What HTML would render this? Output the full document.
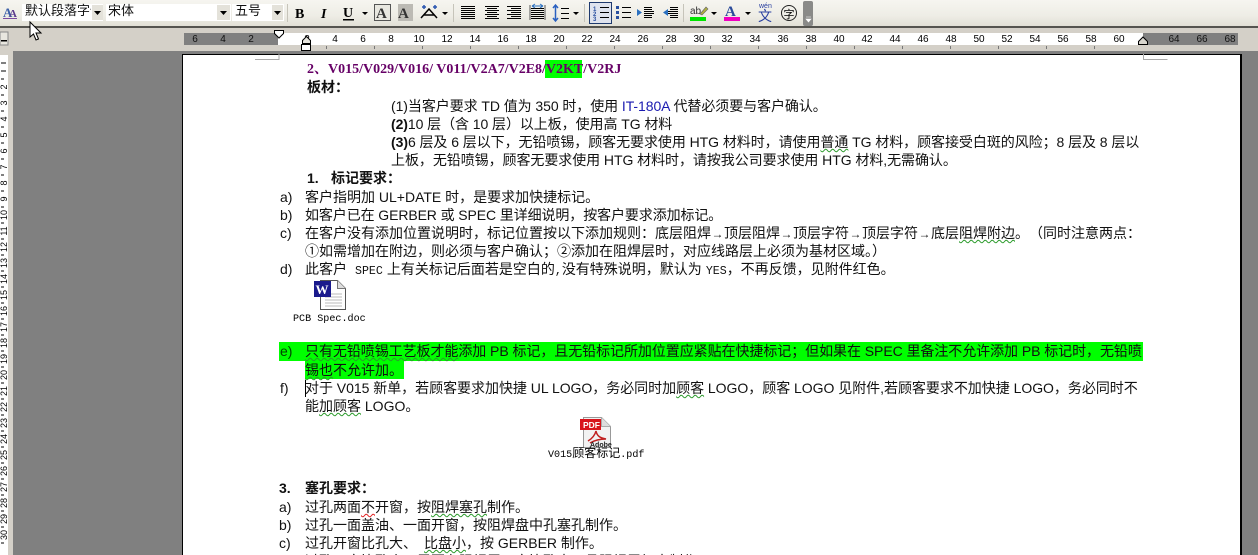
<!DOCTYPE html>
<html lang="zh"><head><meta charset="utf-8"><title>Word</title>
<style>
html,body{margin:0;padding:0;width:1258px;height:555px;overflow:hidden;background:#d4d0c8}
#w{position:absolute;left:0;top:0;width:1258px;height:555px;overflow:hidden}
.a{position:absolute}
.l{position:absolute;white-space:nowrap;font:14px/18px "Liberation Sans","WenQuanYi Zen Hei","Noto Sans CJK SC",sans-serif;color:#111;height:18px}
.b{font-weight:bold}
.g{text-decoration:underline wavy #2a9a2a 1px;text-underline-offset:1px}
.r{text-decoration:underline wavy #e02020 1px;text-underline-offset:1px}
.ar{display:inline-block;width:13px;font-size:12px;line-height:14px;text-align:center;letter-spacing:0;overflow:visible}
.mo{font:11.6px "Liberation Mono",monospace}
.m{position:absolute;white-space:nowrap;font:10.1px/13px "Liberation Mono","WenQuanYi Zen Hei",monospace;color:#000}
svg{position:absolute;left:0;top:0}
.t{font:10px "Liberation Sans",sans-serif;fill:#000;text-anchor:middle}
.tg{font:10px "Liberation Sans",sans-serif;fill:#111;text-anchor:middle}
</style></head><body><div id="w">
<div class="a" style="left:0;top:0;width:1258px;height:26px;background:linear-gradient(#f6f5f0,#eeede6 60%,#e2e0d6)"></div>
<div class="a" style="left:0;top:26px;width:1258px;height:2px;background:#55544f"></div>
<div class="a" style="left:0;top:28px;width:1258px;height:25px;background:#d4d0c8"></div>
<div class="a" style="left:13px;top:51px;width:1245px;height:504px;background:#808080"></div>
<div class="a" style="left:0;top:55px;width:8px;height:500px;background:#fff"></div>
<div class="a" style="left:183px;top:54px;width:1057px;height:501px;background:#fff;border-left:1px solid #000;border-right:2px solid #000;border-top:1px solid #000;box-sizing:content-box;margin-left:-1px"></div>

<!-- combos -->
<div class="a" style="left:22px;top:4px;width:81px;height:17px;background:#fff"></div>
<div class="a" style="left:106px;top:4px;width:125px;height:17px;background:#fff"></div>
<div class="a" style="left:232px;top:4px;width:52px;height:17px;background:#fff"></div>
<div class="a" style="left:92px;top:5px;width:11px;height:15px;background:#e4e2da"></div>
<div class="a" style="left:217px;top:5px;width:13px;height:15px;background:#e4e2da"></div>
<div class="a" style="left:272px;top:5px;width:11px;height:15px;background:#e4e2da"></div>
<div class="l" style="left:25px;top:2px;width:66px;overflow:hidden;font-size:13px">默认段落字体</div>
<div class="l" style="left:108px;top:2px;font-size:13px">宋体</div>
<div class="l" style="left:235px;top:2px;font-size:13px">五号</div>

<svg width="1258" height="555" viewBox="0 0 1258 555">
 <!-- style icon -->
 <text x="3" y="17" font-family="Liberation Serif" font-size="13" font-weight="bold" fill="#3b5fa8">A</text>
 <text x="9" y="17" font-family="Liberation Serif" font-size="11" font-weight="bold" fill="#5a3a8c">A</text>
 <rect x="3" y="18" width="14" height="1" fill="#7a4aa0"/>
 <!-- dropdown arrows -->
 <g fill="#000">
  <path d="M94 11h7l-3.500 4z"/><path d="M220 11h7l-3.500 4z"/><path d="M274 11h7l-3.500 4z"/>
  <path d="M362 12h6l-3 3z"/><path d="M442 12h6l-3 3z"/><path d="M573 12h6l-3 3z"/>
  <path d="M711 12h6l-3 3z"/><path d="M745 12h6l-3 3z"/>
 </g>
 <!-- separators -->
 <g fill="#c6c4ba"><rect x="287" y="4" width="1" height="18"/><rect x="453" y="4" width="1" height="18"/><rect x="584" y="4" width="1" height="18"/><rect x="683" y="4" width="1" height="18"/></g>
 <!-- B I U A A -->
 <text x="295" y="18" font-family="Liberation Serif" font-size="14" font-weight="bold">B</text>
 <text x="321" y="18" font-family="Liberation Serif" font-size="14" font-weight="bold" font-style="italic">I</text>
 <text x="343" y="17" font-family="Liberation Serif" font-size="14" font-weight="bold">U</text>
 <rect x="343" y="19" width="11" height="1.500" fill="#000"/>
 <rect x="374.500" y="4.500" width="16" height="16" fill="#e8e7e0" stroke="#555"/>
 <text x="376" y="18" font-family="Liberation Serif" font-size="15" font-weight="bold" fill="#333">A</text>
 <rect x="398" y="4" width="15" height="17" fill="#bcbab4"/>
 <text x="398" y="18" font-family="Liberation Serif" font-size="15" font-weight="bold" fill="#333">A</text>
 <path d="M421 18l8-9 8 9M424 15h10" fill="none" stroke="#000" stroke-width="1.500"/>
 <path d="M422 7h4M424 5v4M433 7h4M435 5v4" stroke="#2a55b0" stroke-width="1.500"/>
 <!-- alignment -->
 <g stroke="#000" stroke-width="1" fill="none">
  <path d="M461 6.500h14M461 8.500h14M461 10.500h14M461 12.500h14M461 14.500h14M461 16.500h14M461 18.500h14"/>
  <path d="M485 6.500h14M487 8.500h10M485 10.500h14M487 12.500h10M485 14.500h14M487 16.500h10M485 18.500h14"/>
  <path d="M507 6.500h14M511 8.500h10M507 10.500h14M511 12.500h10M507 14.500h14M511 16.500h10M507 18.500h14"/>
  <path d="M531 8.500h13M531 10.500h13M531 12.500h13M531 14.500h13M531 16.500h13M531 18.500h13"/>
  <path d="M530 5v15M545 5v15" stroke="#555"/>
 </g>
 <path d="M532 6h11M532 6l3-2M532 6l3 2M543 6l-3-2M543 6l-3 2" stroke="#2a70c0" fill="none"/>
 <path d="M555.500 6v14M553 8l2.500-3 2.500 3M553 18l2.500 3 2.500-3" stroke="#2a60c0" fill="none" stroke-width="1.500"/>
 <path d="M561 8.500h8M561 13.500h8M561 18.500h8" stroke="#000" fill="none"/>
 <!-- numbering -->
 <rect x="589.500" y="2.500" width="22" height="21" fill="#dfe3ee" stroke="#1f3a6e"/>
 <g stroke="#000" fill="none">
  <path d="M600 7.500h9M600 12.500h9M600 17.500h9"/>
  <path d="M622 7.500h9M622 12.500h9M622 17.500h9"/>
  <path d="M644 7.500h8M644 9.500h8M644 11.500h10M644 13.500h10M644 15.500h8M644 17.500h8"/>
  <path d="M670 7.500h8M670 9.500h8M668 11.500h10M668 13.500h10M670 15.500h8M670 17.500h8"/>
 </g>
 <g fill="#2a50a0">
  <text x="593" y="11" font-size="6" font-family="Liberation Sans" font-weight="bold">1</text>
  <text x="593" y="16" font-size="6" font-family="Liberation Sans" font-weight="bold">2</text>
  <text x="593" y="21" font-size="6" font-family="Liberation Sans" font-weight="bold">3</text>
  <rect x="616" y="6" width="3" height="3"/><rect x="616" y="11" width="3" height="3"/><rect x="616" y="16" width="3" height="3"/>
  <path d="M642 12.500l-5-3.500v7zM663 12.500l5-3.500v7z" fill="#2a70c0"/>
 </g>
 <!-- highlight -->
 <text x="690" y="14" font-size="10" font-family="Liberation Sans" fill="#333">ab</text>
 <path d="M700 14l6-7 2 2-6 6z" fill="#b0b040" stroke="#666" stroke-width=".6"/>
 <rect x="690" y="17" width="16" height="4" fill="#00e400"/>
 <text x="725" y="16" font-family="Liberation Serif" font-size="15" font-weight="bold" fill="#2a4a9a">A</text>
 <rect x="724" y="17" width="16" height="4" fill="#f000c0"/>
 <text x="759" y="8" font-size="7" font-family="Liberation Sans" fill="#2a40a0">wén</text>
 <text x="758" y="21" font-size="14" font-family="WenQuanYi Zen Hei,Noto Sans CJK SC,sans-serif" fill="#2a40a0">文</text>
 <circle cx="789" cy="13" r="7.500" fill="none" stroke="#222"/>
 <text x="783.500" y="18" font-size="11" font-family="WenQuanYi Zen Hei,Noto Sans CJK SC,sans-serif">字</text>
 <rect x="803" y="1" width="10" height="25" rx="2" fill="#8a8a88"/>
 <path d="M806 17h5M806 19h5l-2.500 3z" fill="#fff" stroke="#fff" stroke-width=".6"/>

 <!-- box top-left -->
 <rect x="0" y="32" width="8" height="13" fill="#e8e6df" stroke="#888"/>
 <rect x="1" y="40" width="6" height="1.500" fill="#000"/>

 <!-- h ruler -->
 <rect x="184" y="33" width="94" height="12" fill="#808080"/>
 <rect x="278" y="33" width="865" height="12" fill="#fff"/>
 <rect x="1143" y="33" width="95" height="12" fill="#808080"/>
 <g class="tg">
  <text class="tg" x="195" y="42">6</text><text class="tg" x="223" y="42">4</text><text class="tg" x="251" y="42">2</text>
  <text class="tg" x="1174" y="42">64</text><text class="tg" x="1202" y="42">66</text><text class="tg" x="1230" y="42">68</text>
 </g>
 <g>
  <text class="t" x="307" y="42">2</text><text class="t" x="335" y="42">4</text><text class="t" x="363" y="42">6</text><text class="t" x="391" y="42">8</text><text class="t" x="419" y="42">10</text><text class="t" x="447" y="42">12</text><text class="t" x="475" y="42">14</text><text class="t" x="503" y="42">16</text><text class="t" x="531" y="42">18</text><text class="t" x="559" y="42">20</text><text class="t" x="587" y="42">22</text><text class="t" x="615" y="42">24</text><text class="t" x="643" y="42">26</text><text class="t" x="671" y="42">28</text><text class="t" x="699" y="42">30</text><text class="t" x="727" y="42">32</text><text class="t" x="755" y="42">34</text><text class="t" x="783" y="42">36</text><text class="t" x="811" y="42">38</text><text class="t" x="839" y="42">40</text><text class="t" x="867" y="42">42</text><text class="t" x="895" y="42">44</text><text class="t" x="923" y="42">46</text><text class="t" x="951" y="42">48</text><text class="t" x="979" y="42">50</text><text class="t" x="1007" y="42">52</text><text class="t" x="1035" y="42">54</text><text class="t" x="1063" y="42">56</text><text class="t" x="1091" y="42">58</text><text class="t" x="1119" y="42">60</text>
 </g>
 <path d="M326.500 46v3M374.500 46v3M422.500 46v3M470.500 46v3M518.500 46v3M566.500 46v3M614.500 46v3M662.500 46v3M710.500 46v3M758.500 46v3M806.500 46v3M854.500 46v3M902.500 46v3M950.500 46v3M998.500 46v3M1046.500 46v3M1094.500 46v3" stroke="#777"/>
 <!-- markers -->
 <path d="M274.500 30.500h9v3l-4.500 4.500-4.500-4.500z" fill="#fff" stroke="#000"/>
 <path d="M302.500 40.500l4-4 4 4v3h-8z" fill="#e8e6df" stroke="#000"/>
 <rect x="301.500" y="44.500" width="9" height="6" fill="#fff" stroke="#000"/>
 <path d="M1138.500 44.500v-3l4.500-4.500 4.500 4.500v3z" fill="#d8d6ce" stroke="#000"/>

 <!-- v ruler ticks -->
 <path d="M1 63h5M1 71h5M1 79h3M1 95h3M1 111h3M1 127h3M1 143h3M1 159h3M1 175h3M1 191h3M1 207h3M1 223h3M1 239h3M1 255h3M1 271h3M1 287h3M1 303h3M1 319h3M1 335h3M1 351h3M1 367h3M1 383h3M1 399h3M1 415h3M1 431h3M1 447h3M1 463h3M1 479h3M1 495h3M1 511h3M1 527h3M1 543h3" stroke="#000"/>
 <g font-family="Liberation Sans" font-size="9" fill="#000" text-anchor="middle">
  <text transform="translate(7,87) rotate(-90)">2</text><text transform="translate(7,103) rotate(-90)">3</text><text transform="translate(7,119) rotate(-90)">4</text><text transform="translate(7,135) rotate(-90)">5</text><text transform="translate(7,151) rotate(-90)">6</text><text transform="translate(7,167) rotate(-90)">7</text><text transform="translate(7,183) rotate(-90)">8</text><text transform="translate(7,199) rotate(-90)">9</text><text transform="translate(7,215) rotate(-90)">10</text><text transform="translate(7,231) rotate(-90)">11</text><text transform="translate(7,247) rotate(-90)">12</text><text transform="translate(7,263) rotate(-90)">13</text><text transform="translate(7,279) rotate(-90)">14</text><text transform="translate(7,295) rotate(-90)">15</text><text transform="translate(7,311) rotate(-90)">16</text><text transform="translate(7,327) rotate(-90)">17</text><text transform="translate(7,343) rotate(-90)">18</text><text transform="translate(7,359) rotate(-90)">19</text><text transform="translate(7,375) rotate(-90)">20</text><text transform="translate(7,391) rotate(-90)">21</text><text transform="translate(7,407) rotate(-90)">22</text><text transform="translate(7,423) rotate(-90)">23</text><text transform="translate(7,439) rotate(-90)">24</text><text transform="translate(7,455) rotate(-90)">25</text><text transform="translate(7,471) rotate(-90)">26</text><text transform="translate(7,487) rotate(-90)">27</text><text transform="translate(7,503) rotate(-90)">28</text><text transform="translate(7,519) rotate(-90)">29</text><text transform="translate(7,535) rotate(-90)">30</text>
 </g>

 <!-- crop marks -->
 <path d="M255 59.500h24V54M1143.500 54v5.500h24" fill="none" stroke="#aaa"/>
 <!-- cursor -->
 <path d="M30 22v15l3.500-3 2.500 6 2.500-1-2.500-6h5z" fill="#fff" stroke="#000"/>
</svg>

<!-- document text -->
<div class="a" style="left:279px;top:342px;width:864px;height:19px;background:#00ff00"></div>
<div class="a" style="left:305px;top:361px;width:99px;height:18px;background:#00ff00"></div>
<div class="a" style="left:545px;top:60px;width:37px;height:18px;background:#00ff00"></div>

<div class="l b" style="left:307px;top:61px;color:#660066;font-family:'Liberation Serif','Noto Serif CJK SC',serif">2、<span style="position:absolute;left:21px;top:0">V015/V029/V016/ V011/V2A7/V2E8/V2KT/V2RJ</span></div>
<div class="l b" style="left:307px;top:78px">板材：</div>
<div class="l" style="left:391px;top:97px;letter-spacing:-.07px">(1)当客户要求 TD 值为 350 时，使用 <span style="color:#1a1ab0">IT-180A</span> 代替必须要与客户确认。</div>
<div class="l" style="left:391px;top:115px;letter-spacing:-.07px"><b>(2)</b>10 层（含 10 层）以上板，使用高 TG 材料</div>
<div class="l" style="left:391px;top:133px;letter-spacing:-.06px"><b>(3)</b>6 层及 6 层以下，无铅喷锡，顾客无要求使用 HTG 材料时，请使用<span class="g">普通</span> TG 材料，顾客接受白斑的风险；8 层及 8 层以</div>
<div class="l" style="left:391px;top:151px;letter-spacing:-.06px">上板，无铅喷锡，顾客无要求使用 HTG 材料时，请按我公司要求使用 HTG 材料,无需确认。</div>
<div class="l b" style="left:307px;top:169px">1.<span style="position:absolute;left:24px;top:0">标记要求：</span></div>
<div class="l" style="left:280px;top:188px">a)</div><div class="l" style="left:305px;top:188px">客户指明加 UL+DATE 时，是要求加快捷标记。</div>
<div class="l" style="left:280px;top:206px">b)</div><div class="l" style="left:305px;top:206px;letter-spacing:-.1px">如客户已在 GERBER 或 SPEC 里详细说明，按客户要求添加标记。</div>
<div class="l" style="left:280px;top:224px">c)</div><div class="l" style="left:305px;top:224px;text-spacing-trim:space-all">在客户没有添加位置说明时，标记位置按以下添加规则：底层阻焊<span class="ar">→</span>顶层阻焊<span class="ar">→</span>顶层字符<span class="ar">→</span>顶层字符<span class="ar">→</span>底层<span class="g">阻焊附边</span>。（同时注意两点：</div>
<div class="l" style="left:305px;top:242px">①如需增加在附边，则必须与客户确认；②添加在阻焊层时，对应线路层上必须为基材区域。）</div>
<div class="l" style="left:280px;top:260px">d)</div><div class="l" style="left:305px;top:260px">此客户<span class="mo" style="margin-left:8px;margin-right:4px">SPEC</span>上有关标记后面若是空白的<span class="mo">,</span>没有特殊说明，默认为<span class="mo" style="margin-left:4px">YES</span>，不再反馈，见附件红色。</div>

<svg class="a" style="left:313px;top:279px" width="36" height="34" viewBox="0 0 36 34">
 <path d="M7.500 1.500h17l8 8v21h-25z" fill="#fff" stroke="#555"/>
 <path d="M24.500 1.500v8h8" fill="#ddd" stroke="#777"/>
 <path d="M12 15h17M12 18h17M12 21h17M12 24h17M12 27h17" stroke="#bbb"/>
 <rect x="1" y="2" width="17" height="16" fill="#1a1a8c"/>
 <text x="2.500" y="15" font-family="Liberation Serif" font-size="13" font-weight="bold" fill="#fff">W</text>
</svg>
<div class="m" style="left:293px;top:313px">PCB Spec.doc</div>

<div class="l" style="left:280px;top:342px;color:#004400">e)</div>
<div class="l" style="left:305px;top:342px;letter-spacing:-.06px"><span class="g">只有无铅喷锡工艺板才能</span>添加 PB 标记，且无铅标记所加位置应紧贴在快捷标记；但如果在 SPEC 里备注不允许添加 PB 标记时，无铅喷</div>
<div class="l" style="left:305px;top:361px"><span class="g">锡也</span>不允许加。</div>
<div class="l" style="left:280px;top:379px">f)</div>
<div class="a" style="left:305px;top:380px;width:1px;height:17px;background:#000"></div>
<div class="l" style="left:305px;top:379px;letter-spacing:-.03px">对于 V015 新单，若顾客要求加快捷 UL LOGO，务必同时加<span class="g">顾客</span> LOGO，顾客 LOGO 见附件,若顾客要求不加快捷 LOGO，务必同时不</div>
<div class="l" style="left:305px;top:397px">能<span class="g">加顾客</span> LOGO。</div>

<svg class="a" style="left:578px;top:416px" width="36" height="34" viewBox="0 0 36 34">
 <path d="M5.500 1.500h18l9 9v21h-27z" fill="#f2f2f2" stroke="#999"/>
 <path d="M23.500 1.500v9h9" fill="#ddd" stroke="#aaa"/>
 <rect x="2" y="3" width="21" height="11" fill="#d8141c"/>
 <text x="5" y="12" font-family="Liberation Sans" font-size="8.500" font-weight="bold" fill="#fff">PDF</text>
 <path d="M10 25c5-3 7-6 8-10 1 5 4 7 10 8-6 0-11 1-16 4" fill="none" stroke="#c02020" stroke-width="1.500"/>
 <text x="12" y="31" font-family="Liberation Sans" font-size="7" font-weight="bold" fill="#222">Adobe</text>
</svg>
<div class="m" style="left:548px;top:448px">V015<span style="font-size:12px">顾客标记</span>.pdf</div>

<div class="l b" style="left:279px;top:479px">3.<span style="position:absolute;left:26px;top:0">塞孔要求：</span></div>
<div class="l" style="left:279px;top:498px">a)</div><div class="l" style="left:305px;top:498px">过孔两面<span class="r">不</span>开窗，按<span class="g">阻焊塞孔</span>制作。</div>
<div class="l" style="left:279px;top:516px">b)</div><div class="l" style="left:305px;top:516px">过孔一面盖油、一面开窗，按阻焊盘中孔塞孔制作。</div>
<div class="l" style="left:279px;top:534px">c)</div><div class="l" style="left:305px;top:534px">过孔开窗比孔大、<span class="g" style="margin-left:7px">比盘小</span>，按 GERBER 制作。</div>
<div class="l" style="left:305px;top:552px">过孔开窗比孔小，需要在阻焊层开窗比孔大，且阻焊层加大制作。</div>
</div></body></html>
